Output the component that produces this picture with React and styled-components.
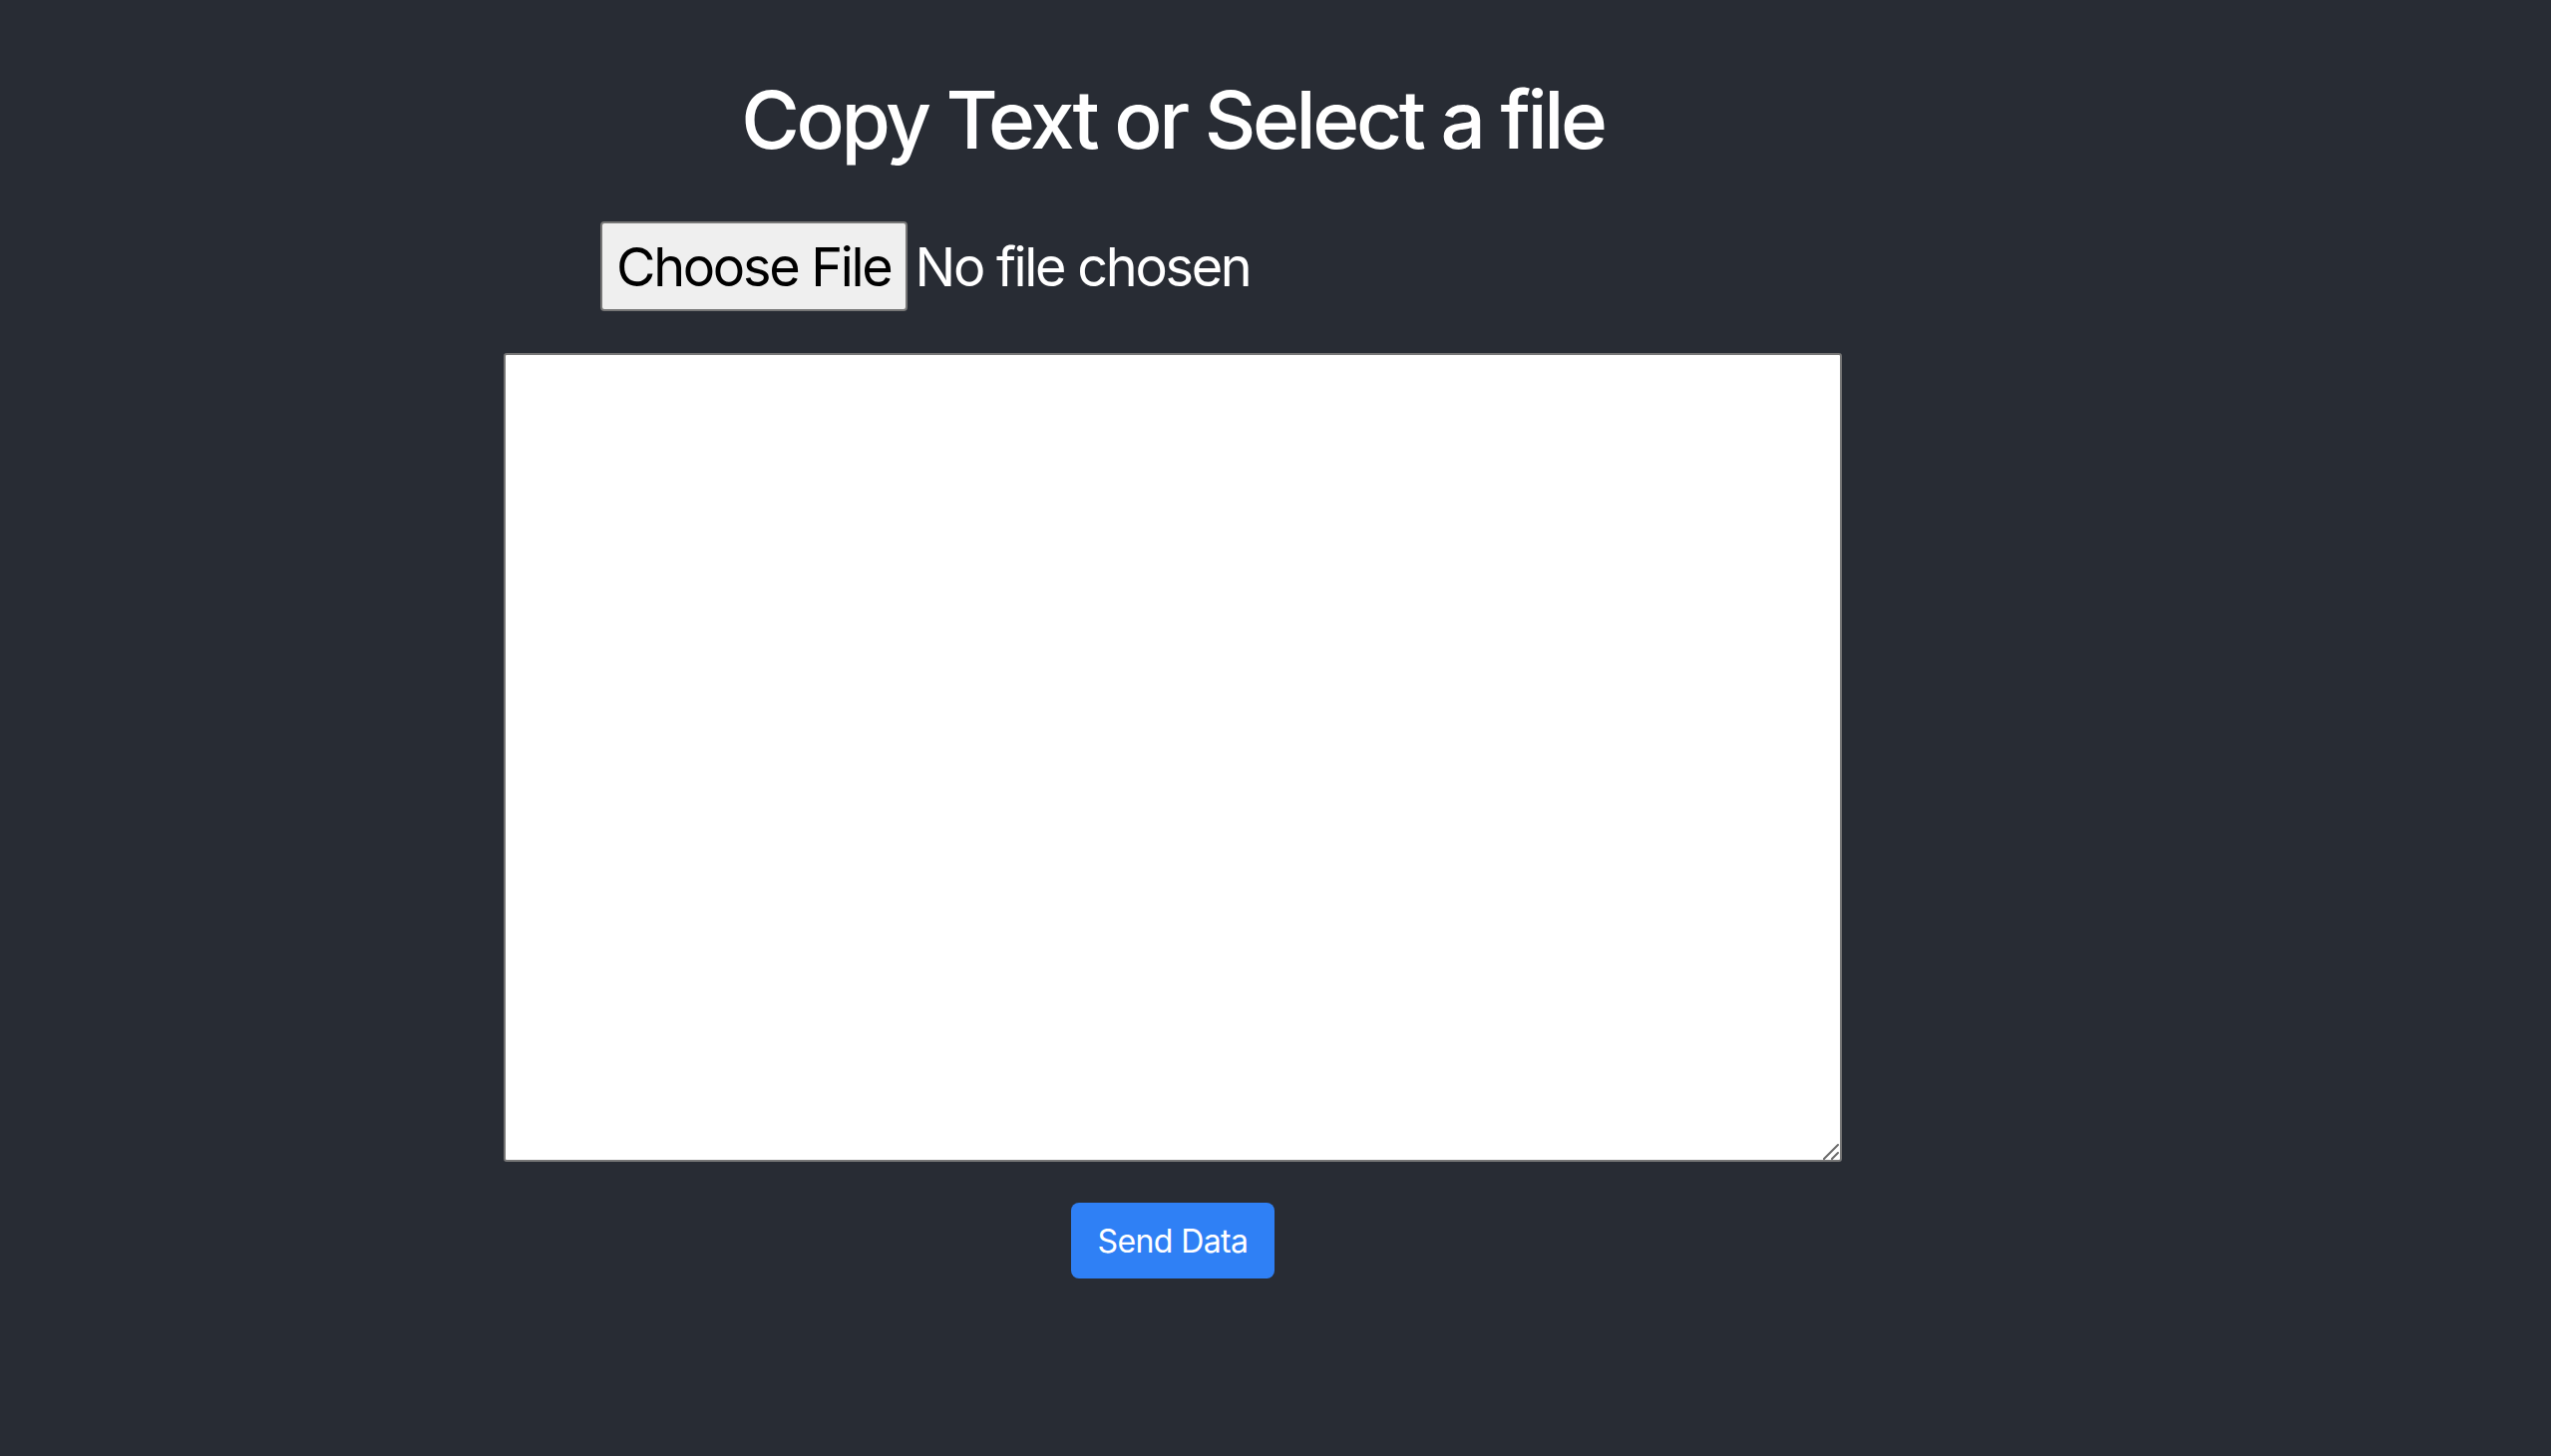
import React, { useState } from "react";
import styled, { createGlobalStyle } from "styled-components";

const GlobalStyle = createGlobalStyle`
    body {
        margin: 0;
        background-color: #282c34;
        font-family: Inter, "Noto Sans", sans-serif;
    }
`;

const Page = styled.div`
    min-height: 100vh;
    background-color: #282c34;
    color: #ffffff;
    padding-top: 72px;
    box-sizing: border-box;
`;

const Column = styled.div`
    width: 2352px;
    display: flex;
    flex-direction: column;
    align-items: center;
`;

const Title = styled.h1`
    margin: 0;
    font-size: 80px;
    font-weight: 500;
    line-height: 96px;
    letter-spacing: -3.4px;
    color: #ffffff;
`;

const FileRow = styled.label`
    align-self: flex-start;
    margin-left: 602px;
    margin-top: 54px;
    display: flex;
    align-items: center;
    gap: 8px;
    font-size: 54px;
    letter-spacing: -2.3px;
    cursor: pointer;
    input {
        display: none;
    }
`;

const FileButton = styled.span`
    box-sizing: border-box;
    height: 90px;
    display: flex;
    align-items: center;
    padding: 0 14px;
    background-color: #efefef;
    color: #000000;
    border: 2px solid #767676;
    border-radius: 4px;
`;

const FileName = styled.span`
    color: #ffffff;
`;

const TextWrap = styled.div`
    position: relative;
    margin-top: 42px;
    width: 1342px;
    height: 811px;
`;

const TextBox = styled.textarea`
    display: block;
    box-sizing: border-box;
    width: 100%;
    height: 100%;
    border: 2px solid #767676;
    border-radius: 3px;
    background: #ffffff;
    font-family: Inter, sans-serif;
    font-size: 32px;
    padding: 4px;
    outline: none;
    resize: none;
`;

const Grip = styled.svg`
    position: absolute;
    right: 2px;
    bottom: 2px;
    pointer-events: none;
`;

const SendButton = styled.button`
    box-sizing: border-box;
    width: 204px;
    height: 76px;
    margin-top: 41px;
    background-color: #2f80f5;
    color: #ffffff;
    border: 0;
    border-radius: 8px;
    font-family: Inter, sans-serif;
    font-size: 32px;
    letter-spacing: -0.6px;
    cursor: pointer;
`;

const App = () => {
    const [text, setText] = useState('')
    const [file, setFile] = useState(null)

    const handleFileChange = (e) => {
        const chosen = e.target.files[0]
        if (chosen) setFile(chosen)
    }

    return (
        <Page>
            <GlobalStyle />
            <Column>
                <Title>Copy Text or Select a file</Title>
                <FileRow>
                    <input type="file" onChange={handleFileChange} />
                    <FileButton>Choose File</FileButton>
                    <FileName>{file ? file.name : 'No file chosen'}</FileName>
                </FileRow>
                <TextWrap>
                    <TextBox value={text} onChange={(e) => setText(e.target.value)} />
                    <Grip width="18" height="18" viewBox="0 0 18 18">
                        <path d="M2 17 L16 3 M10 17 L16 11" stroke="#6b6b6b" strokeWidth="2" strokeLinecap="round" fill="none" />
                    </Grip>
                </TextWrap>
                <SendButton>Send Data</SendButton>
            </Column>
        </Page>
    )
}

export default App
